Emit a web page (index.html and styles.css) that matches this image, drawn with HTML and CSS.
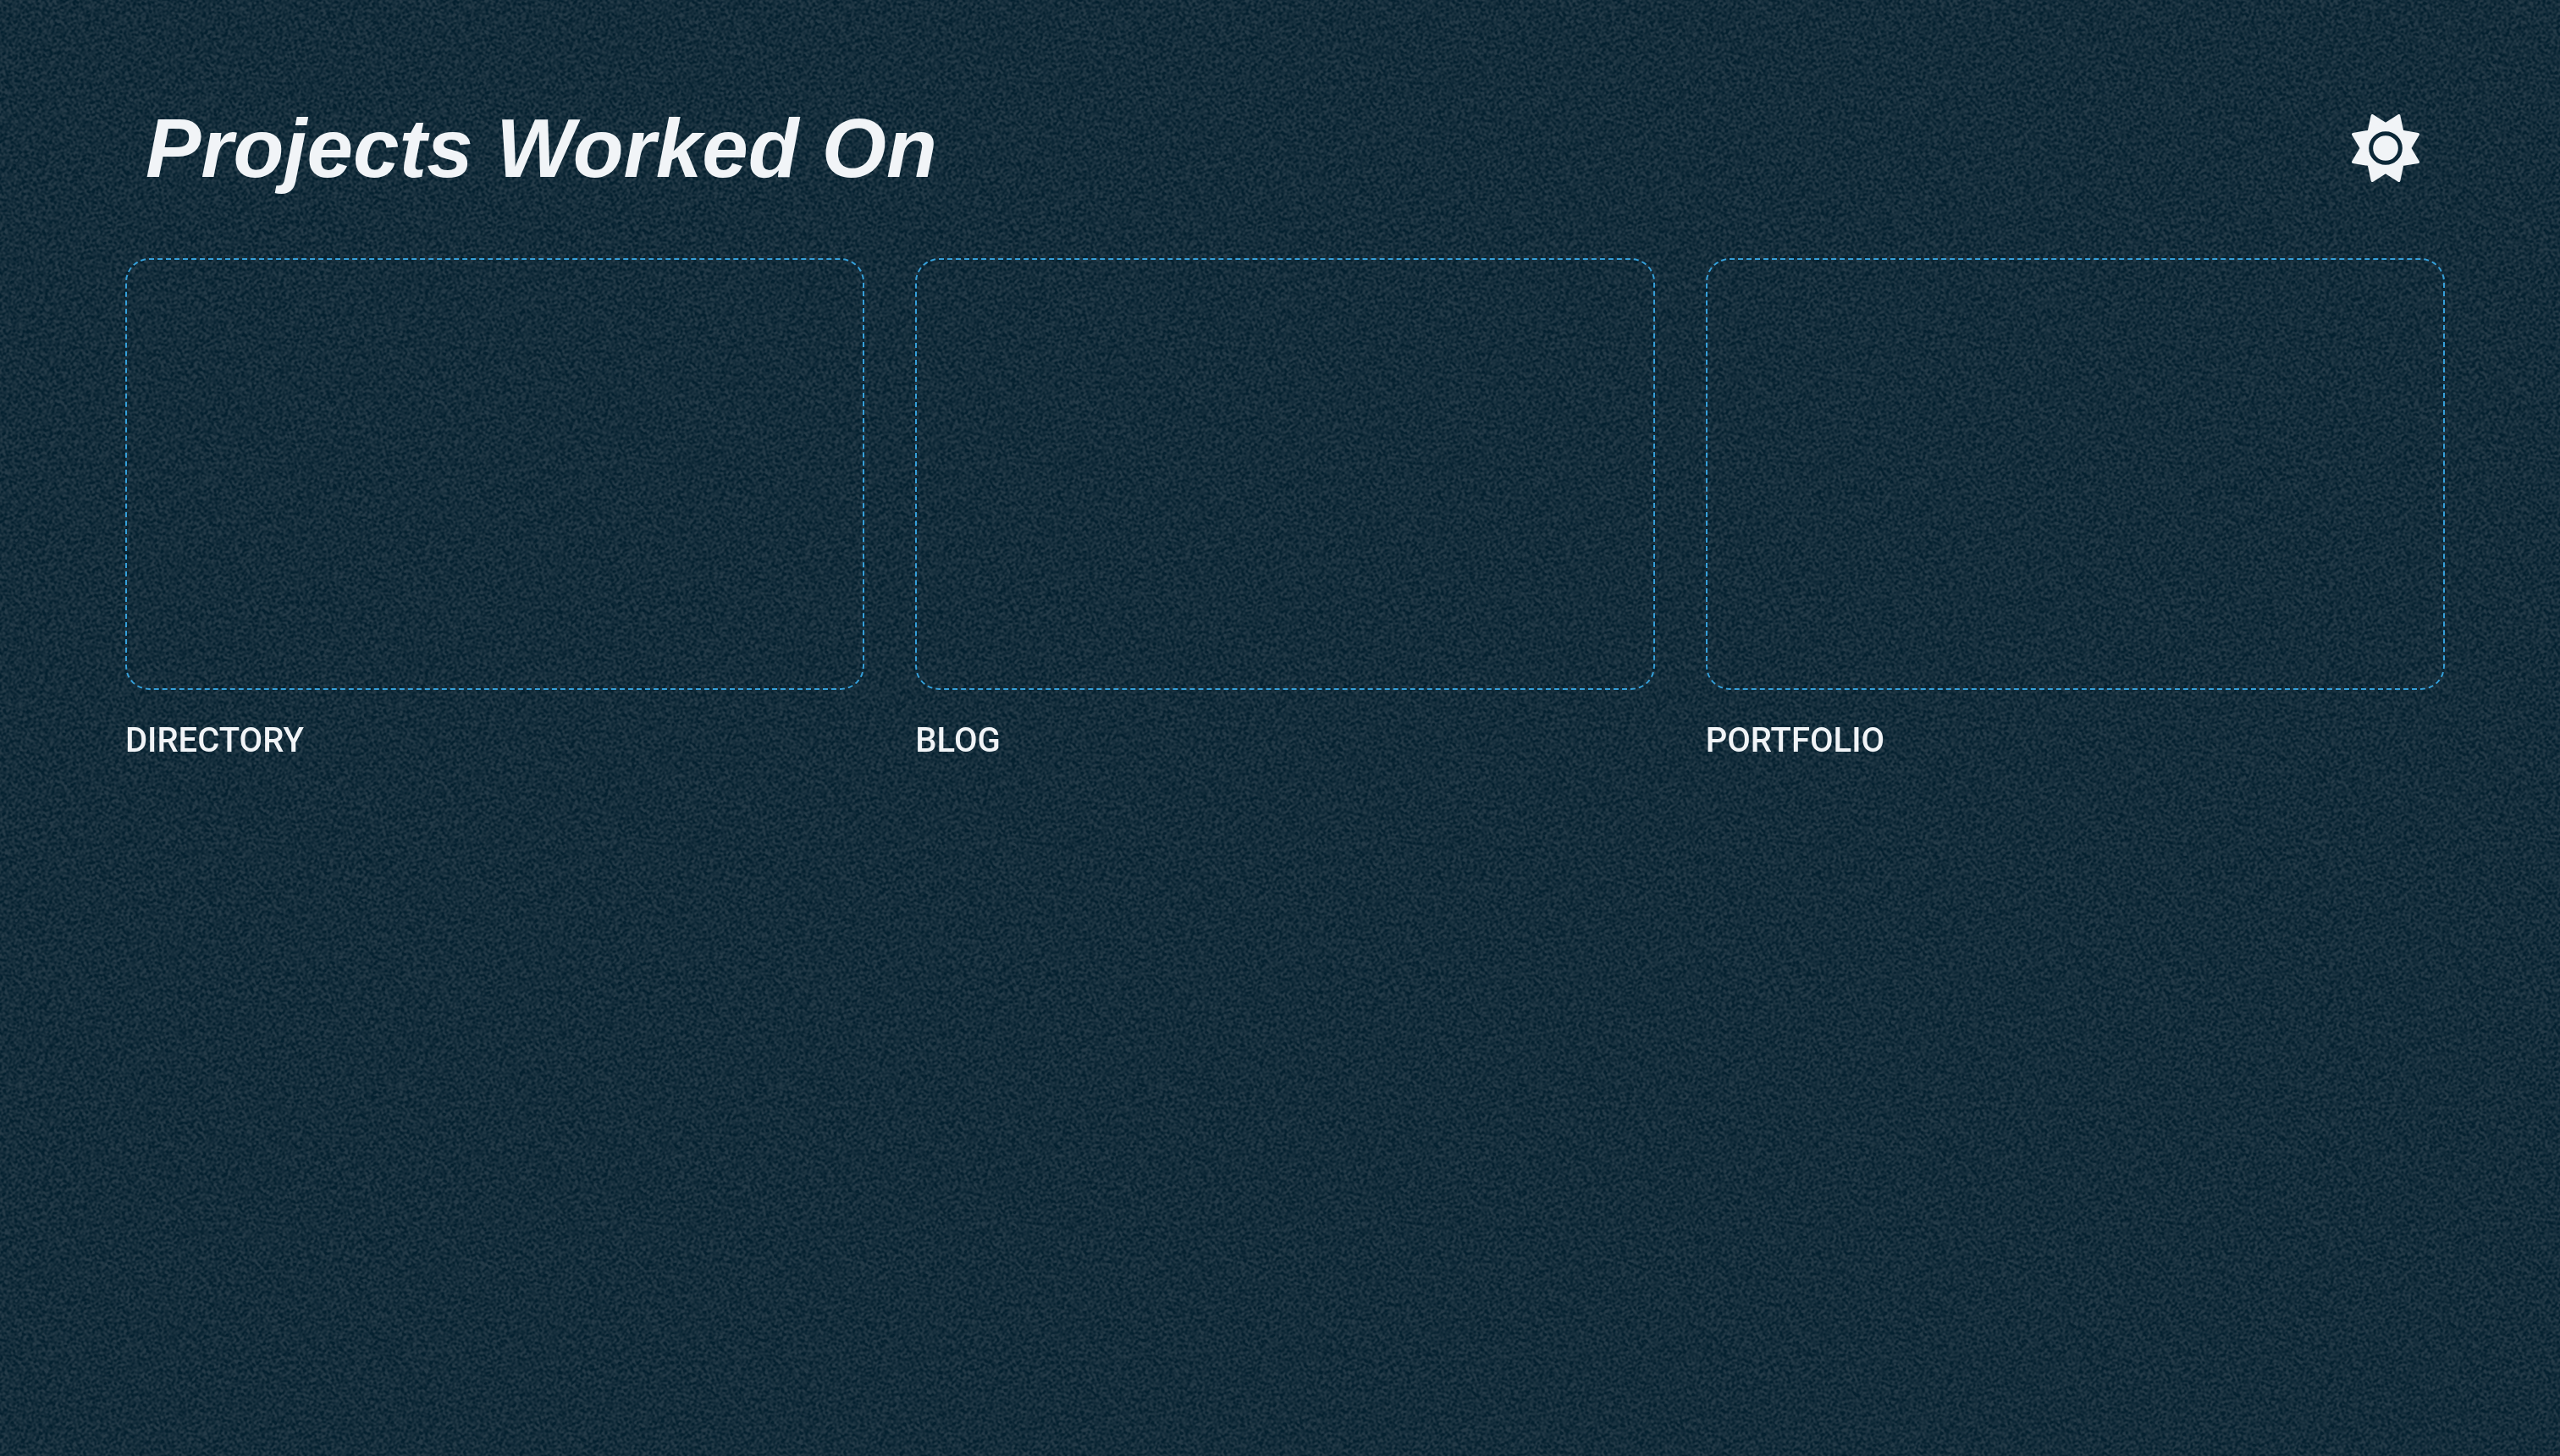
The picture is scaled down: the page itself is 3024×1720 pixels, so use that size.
FILE: index.html
```html
<!DOCTYPE html>
<html lang="en">
<head>
<meta charset="utf-8">
<title>Projects Worked On</title>
<link rel="stylesheet" href="styles.css">
</head>
<body>
<svg class="grain" aria-hidden="true">
  <filter id="noise" x="-1%" y="-1%" width="102%" height="102%" color-interpolation-filters="sRGB">
    <feTurbulence type="fractalNoise" baseFrequency="0.57" numOctaves="4" seed="3"/>
    <feGaussianBlur stdDeviation="1"/>
    <feColorMatrix values="0 0 0 0 0.149  0 0 0 0 0.235  0 0 0 0 0.286  0 0 0 10 -4.5"/>
  </filter>
  <rect width="100%" height="100%" filter="url(#noise)"/>
</svg>
<div class="page">
  <header class="header">
    <h1 class="title">Projects Worked On</h1>
    <button class="theme-toggle" type="button" aria-label="Toggle theme">
      <svg class="sun" viewBox="54 42 240 240" aria-hidden="true">
        <path class="rays" d="M127 47 174 77 221 47 233 103 289 113 260 162 289 211 233 220 221 277 174 247 127 277 115 220 59 211 88 162 59 113 115 103Z"/>
        <circle class="ring" cx="174" cy="162" r="52"/>
      </svg>
    </button>
  </header>
  <main class="projects">
    <a class="project" href="#directory"><span class="preview"></span><span class="name">DIRECTORY</span></a>
    <a class="project" href="#blog"><span class="preview"></span><span class="name">BLOG</span></a>
    <a class="project" href="#portfolio"><span class="preview"></span><span class="name">PORTFOLIO</span></a>
  </main>
</div>
</body>
</html>
```
FILE: styles.css
```css
* { box-sizing: border-box; }

body {
  margin: 0;
  min-height: 100vh;
  background: #04202f;
  color: #f1f4f7;
  font-family: Roboto, "Liberation Sans", sans-serif;
}

.grain {
  position: fixed;
  inset: 0;
  z-index: -1;
  width: 100%;
  height: 100%;
}

.page { padding: 115px 136px 64px 148px; }

.header {
  display: flex;
  align-items: center;
  justify-content: space-between;
  padding: 0 30px 0 24px;
  margin-bottom: 70px;
}

.title {
  margin: 0;
  font-family: "Liberation Sans", Arial, sans-serif;
  font-size: 98px;
  line-height: 120px;
  font-weight: 700;
  font-style: italic;
}

.theme-toggle {
  display: flex;
  padding: 0;
  border: 0;
  background: none;
  color: inherit;
  cursor: pointer;
}

.sun { width: 80px; height: 80px; }
.rays { fill: currentColor; stroke: currentColor; stroke-width: 10; stroke-linejoin: round; }
.ring { fill: none; stroke: #0b2737; stroke-width: 15; }

.projects {
  display: grid;
  grid-template-columns: repeat(3, 1fr);
  gap: 60px;
}

.project {
  display: flex;
  flex-direction: column;
  gap: 36px;
  color: inherit;
  text-decoration: none;
}

.preview {
  height: 510px;
  border: 2px dashed #36a0da;
  border-radius: 28px;
}

.name {
  font-size: 40px;
  line-height: 48px;
  font-weight: 500;
}
```
